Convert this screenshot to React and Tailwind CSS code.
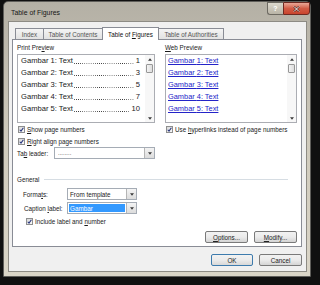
import React from "react";

const Check = () => (
  <span className="w-[7px] h-[7px] border border-[#8e8f8f] bg-gradient-to-br from-[#d8d8d8] to-[#fbfbfb] flex items-center justify-center shrink-0">
    <svg width="5" height="5" viewBox="0 0 10 10">
      <path d="M1.5 5.5 L4 8.2 L8.8 1.5" stroke="#28367e" strokeWidth="2.2" fill="none" />
    </svg>
  </span>
);

const Arrow = ({ up }) => (
  <svg width="4" height="3" viewBox="0 0 8 5">
    <path d={up ? "M0 5 L4 0 L8 5 Z" : "M0 0 L4 5 L8 0 Z"} fill="#3a3a3a" />
  </svg>
);

const Scrollbar = () => (
  <div className="w-[9px] shrink-0 flex flex-col items-center bg-[#f7f7f7]">
    <div className="h-[8px] flex items-center justify-center">
      <Arrow up />
    </div>
    <div className="mt-[1px] w-[7px] h-[9px] border border-[#979797] bg-gradient-to-r from-[#f3f3f3] to-[#dedede] rounded-[1px]" />
    <div className="flex-1" />
    <div className="h-[8px] flex items-center justify-center">
      <Arrow />
    </div>
  </div>
);

const DropBtn = () => (
  <div className="w-[10px] h-full border-l border-[#b5b5b5] bg-gradient-to-b from-[#f4f4f4] to-[#dcdcdc] flex items-center justify-center">
    <Arrow />
  </div>
);

const PrintRow = ({ n, p }) => (
  <div className="h-[12px] min-w-0 flex items-center pl-[3px] pr-[5px] text-[7.6px] leading-none text-[#1a1a1a] whitespace-nowrap">
    <span className="shrink-0">Gambar {n}: Text</span>
    <span className="flex-1 min-w-0 h-[1px] mt-[5px] mx-[1px] bg-[linear-gradient(to_right,#333_1px,transparent_1px)] bg-[length:2.1px_1px] bg-repeat-x" />
    <span className="shrink-0 pl-[1px]">{p}</span>
  </div>
);

const WebRow = ({ n }) => (
  <div className="h-[12px] flex items-center pl-[2px] text-[7.4px] leading-none">
    <span className="text-[#2323c8] underline">Gambar {n}: Text</span>
  </div>
);

const Btn = ({ children, def }) => (
  <div
    className={
      def
        ? "w-[42px] h-[12px] rounded-[2px] border border-[#3d7bad] bg-gradient-to-b from-[#f2f2f2] via-[#ebebeb] to-[#d8d8d8] flex items-center justify-center text-[#222]"
        : "w-[43px] h-[12px] rounded-[2px] border border-[#7a7a7a] bg-gradient-to-b from-[#f2f2f2] via-[#ebebeb] to-[#d4d4d4] flex items-center justify-center text-[#222]"
    }
  >
    {children}
  </div>
);

export default function App() {
  return (
    <div className="w-[320px] h-[285px] bg-[#101010] pt-[1px] pl-[3px] pr-[9px] pb-[8px] font-['Liberation_Sans',Arial,sans-serif] text-[6.3px] leading-[7px] text-[#1a1a1a] overflow-hidden">
      <div className="h-full flex flex-col rounded-t-[5px] border border-[#5f5e5a] bg-gradient-to-b from-[#b4b0a5] via-[#cfcabc] to-[#dad5c7]">
        {/* title bar */}
        <div className="h-[19px] shrink-0 flex items-start">
          <div className="pl-[7px] pt-[7px] text-[6.9px] leading-[8px] text-[#161616]">Table of Figures</div>
          <div className="ml-auto flex">
            <div className="w-[16px] h-[13px] rounded-bl-[3px] border border-[#6d6a62] border-r-0 bg-gradient-to-b from-[#dcd8cd] to-[#b9b4a6] flex items-center justify-center text-[7px] font-bold text-white">
              ?
            </div>
            <div className="w-[27px] h-[13px] rounded-br-[3px] border border-[#6e2a22] bg-gradient-to-b from-[#e9a797] via-[#d25b45] to-[#c9442d] flex items-center justify-center">
              <svg width="7" height="6" viewBox="0 0 14 12">
                <path d="M2 1 L12 11 M12 1 L2 11" stroke="#4a1a14" strokeWidth="3.6" />
                <path d="M2 1 L12 11 M12 1 L2 11" stroke="#ffffff" strokeWidth="2" />
              </svg>
            </div>
          </div>
        </div>

        {/* dialog body */}
        <div className="flex-1 mx-[4px] mr-[3px] mb-[4px] border border-[#8d8b84] bg-[#f0f0f0] flex flex-col pl-[3px] pr-[4px] pt-[5px]">
          {/* tabs */}
          <div className="relative z-10 flex items-end h-[13px] ml-[3px] -mb-px">
            <div className="w-[29px] h-[11px] mb-[1px] border border-b-0 border-[#898c95] bg-gradient-to-b from-[#f4f4f4] to-[#e2e2e2] flex items-center justify-center text-[#555]">
              Index
            </div>
            <div className="w-[59px] h-[11px] mb-[1px] border border-l-0 border-b-0 border-[#898c95] bg-gradient-to-b from-[#f4f4f4] to-[#e2e2e2] flex items-center justify-center text-[#555]">
              Table of Contents
            </div>
            <div className="w-[57px] h-[13px] -ml-px border border-b-0 border-[#898c95] bg-white flex items-center justify-center text-[#111]">
              <span>
                Table of <u>F</u>igures
              </span>
            </div>
            <div className="w-[65px] h-[11px] mb-[1px] border border-l-0 border-b-0 border-[#898c95] bg-gradient-to-b from-[#f4f4f4] to-[#e2e2e2] flex items-center justify-center text-[#555]">
              Table of Authorities
            </div>
          </div>

          {/* panel */}
          <div className="relative z-0 border border-[#898c95] bg-white flex flex-col pt-[4px] pl-[4px] pr-[4px] pb-[3px]">
            <div className="flex gap-[10px]">
              {/* left column */}
              <div className="w-[138px] min-w-0 flex flex-col">
                <div className="h-[7px]">
                  Print Pre<u>v</u>iew
                </div>
                <div className="mt-[3px] h-[69px] border border-[#abadb3] bg-white flex overflow-hidden">
                  <div className="flex-1 min-w-0 flex flex-col">
                    <PrintRow n={1} p="1" />
                    <PrintRow n={2} p="3" />
                    <PrintRow n={3} p="5" />
                    <PrintRow n={4} p="7" />
                    <PrintRow n={5} p="10" />
                  </div>
                  <Scrollbar />
                </div>
                <div className="mt-[1px] h-[11px] flex items-center gap-[2px] pl-[1px]">
                  <Check />
                  <span>
                    <u>S</u>how page numbers
                  </span>
                </div>
                <div className="h-[12px] flex items-center gap-[2px] pl-[1px]">
                  <Check />
                  <span>
                    <u>R</u>ight align page numbers
                  </span>
                </div>
                <div className="h-[12px] flex items-center">
                  <span className="w-[37px]">
                    Ta<u>b</u> leader:
                  </span>
                  <div className="flex-1 h-[12px] border border-[#a5acb5] bg-white flex">
                    <div className="flex-1 pl-[3px] flex items-center text-[6px]">........</div>
                    <DropBtn />
                  </div>
                </div>
              </div>

              {/* right column */}
              <div className="w-[132px] min-w-0 flex flex-col">
                <div className="h-[7px]">
                  <u>W</u>eb Preview
                </div>
                <div className="mt-[3px] h-[69px] border border-[#abadb3] bg-white flex overflow-hidden">
                  <div className="flex-1 min-w-0 flex flex-col">
                    <WebRow n={1} />
                    <WebRow n={2} />
                    <WebRow n={3} />
                    <WebRow n={4} />
                    <WebRow n={5} />
                  </div>
                  <Scrollbar />
                </div>
                <div className="mt-[1px] h-[11px] flex items-center gap-[2px] pl-[1px]">
                  <Check />
                  <span>
                    Use <u>h</u>yperlinks instead of page numbers
                  </span>
                </div>
              </div>
            </div>

            {/* General */}
            <div className="mt-[17px] h-[7px] flex items-center">
              <span>General</span>
              <div className="flex-1 ml-[5px] mr-[9px] h-px bg-[#d6dde3]" />
            </div>
            <div className="mt-[5px] h-[12px] flex items-center pl-[6px]">
              <span className="w-[44px]">
                Forma<u>t</u>s:
              </span>
              <div className="w-[70px] h-[12px] border border-[#a5acb5] bg-white flex">
                <div className="flex-1 pl-[2px] flex items-center">From template</div>
                <DropBtn />
              </div>
            </div>
            <div className="mt-[2px] h-[12px] flex items-center pl-[7px]">
              <span className="w-[43px]">
                Caption <u>l</u>abel:
              </span>
              <div className="w-[70px] h-[12px] border border-[#a5acb5] bg-white flex">
                <div className="flex-1 p-[1px] flex">
                  <div className="flex-1 bg-[#3399ff] text-white pl-[1px] flex items-center">Gambar</div>
                </div>
                <DropBtn />
              </div>
            </div>
            <div className="mt-[1px] h-[12px] flex items-center gap-[2px] pl-[9px]">
              <Check />
              <span>
                Include label and <u>n</u>umber
              </span>
            </div>
            <div className="mt-[4px] flex justify-end gap-[6px]">
              <Btn>
                <span>
                  <u>O</u>ptions...
                </span>
              </Btn>
              <Btn>
                <span>
                  <u>M</u>odify...
                </span>
              </Btn>
            </div>
          </div>

          {/* OK / Cancel */}
          <div className="mt-[7px] flex justify-end gap-[6px]">
            <Btn def>OK</Btn>
            <Btn>Cancel</Btn>
          </div>
        </div>
      </div>
    </div>
  );
}
